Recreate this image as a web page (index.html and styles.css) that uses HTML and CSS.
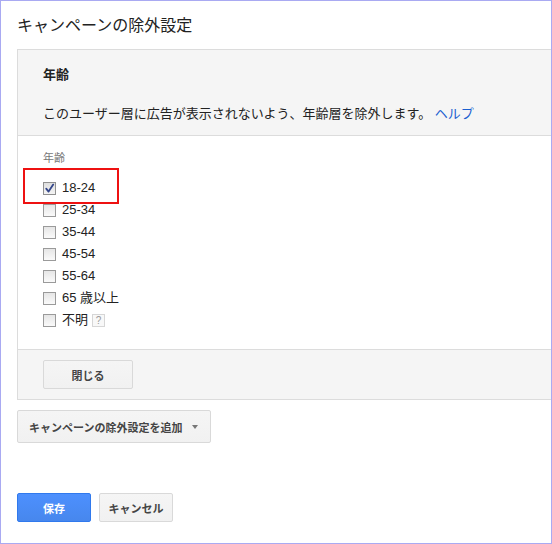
FILE: index.html
```
<!DOCTYPE html>
<html lang="ja">
<head>
<meta charset="utf-8">
<link rel="stylesheet" href="styles.css">
</head>
<body>
<div class="frame">
  <h1 class="title">キャンペーンの除外設定</h1>
  <div class="panel">
    <div class="panel-head">
      <div class="head-title">年齢</div>
      <div class="head-desc">このユーザー層に広告が表示されないよう、年齢層を除外します。 <a class="help" href="#">ヘルプ</a></div>
    </div>
    <div class="panel-body">
      <div class="group-label">年齢</div>
      <ul class="options">
        <li class="opt"><span class="cb checked"><svg viewBox="0 0 13 13" width="13" height="13"><path d="M3.2 6.6 L5.6 9.6 L10.2 2.6" fill="none" stroke="#34468a" stroke-width="1.8" stroke-linecap="round" stroke-linejoin="round"/></svg></span><span class="lbl">18-24</span></li>
        <li class="opt"><span class="cb"></span><span class="lbl">25-34</span></li>
        <li class="opt"><span class="cb"></span><span class="lbl">35-44</span></li>
        <li class="opt"><span class="cb"></span><span class="lbl">45-54</span></li>
        <li class="opt"><span class="cb"></span><span class="lbl">55-64</span></li>
        <li class="opt"><span class="cb"></span><span class="lbl">65 歳以上</span></li>
        <li class="opt"><span class="cb"></span><span class="lbl">不明</span><span class="q">?</span></li>
      </ul>
      <div class="highlight"></div>
    </div>
    <div class="panel-foot">
      <button class="btn btn-close">閉じる</button>
    </div>
  </div>
  <button class="btn btn-add">キャンペーンの除外設定を追加<span class="caret"></span></button>
  <div class="actions">
    <button class="btn btn-primary">保存</button>
    <button class="btn btn-cancel">キャンセル</button>
  </div>
</div>
</body>
</html>
```

FILE: styles.css
```
* { box-sizing: border-box; }
html, body { margin: 0; padding: 0; background: #fff; }
body {
  font-family: "Liberation Sans", Arial, "Noto Sans CJK JP", sans-serif;
  color: #222;
}
.frame {
  width: 552px;
  height: 544px;
  border: 1px solid #a9aaf2;
  padding-left: 16px;
  overflow: hidden;
}
.title {
  margin: 0;
  padding-top: 14px;
  font-size: 16px;
  line-height: 22px;
  font-weight: normal;
  color: #222;
}
.panel {
  margin-top: 12px;
  margin-right: -4px;
  border: 1px solid #dcdcdc;
  border-right: none;
}
.panel-head {
  background: #f5f5f5;
  padding: 16px 25px 12px;
  border-bottom: 1px solid #dcdcdc;
}
.head-title {
  font-size: 13px;
  line-height: 18px;
  font-weight: bold;
  color: #222;
}
.head-desc {
  margin-top: 21px;
  font-size: 13px;
  line-height: 18px;
  color: #222;
}
.help { color: #1a5fd0; text-decoration: none; }
.panel-body {
  position: relative;
  background: #fff;
  padding: 14px 25px 18px;
}
.group-label {
  font-size: 11px;
  line-height: 16px;
  color: #777;
}
.options {
  list-style: none;
  margin: 11px 0 0;
  padding: 0;
}
.opt {
  display: flex;
  align-items: center;
  height: 22px;
  font-size: 13px;
  color: #222;
}
.cb {
  width: 13px;
  height: 13px;
  border: 1px solid #9a9a9a;
  background: linear-gradient(#e6e6e6, #fafafa);
  margin-right: 6px;
  display: flex;
  align-items: center;
  justify-content: center;
  flex: none;
}
.cb svg { display: block; margin: -1px; }
.cb.checked { background: linear-gradient(#dedede, #f4f4f4); border-color: #909090; }
.lbl { line-height: 16px; }
.q {
  margin-left: 4px;
  width: 13px;
  height: 13px;
  border: 1px solid #d6d6d6;
  background: #f8f8f8;
  color: #999;
  font-size: 10px;
  line-height: 11px;
  text-align: center;
}
.highlight {
  position: absolute;
  left: 5px;
  top: 32px;
  width: 96px;
  height: 36px;
  border: 2px solid #ee1111;
}
.panel-foot {
  background: #f5f5f5;
  border-top: 1px solid #dcdcdc;
  padding: 10px 25px;
}
.btn {
  font-family: "Liberation Sans", Arial, "Noto Sans CJK JP", sans-serif;
  font-size: 11px;
  font-weight: bold;
  color: #444;
  background: linear-gradient(#f5f5f5, #f1f1f1);
  border: 1px solid #d9d9d9;
  border-radius: 2px;
  padding: 0;
  display: flex;
  align-items: center;
  justify-content: center;
}
.btn-close { width: 90px; height: 29px; }
.btn-add {
  margin-top: 10px;
  width: 194px;
  height: 33px;
  justify-content: flex-start;
  padding-left: 11px;
}
.caret {
  margin-left: 10px;
  width: 0;
  height: 0;
  border-left: 3.5px solid transparent;
  border-right: 3.5px solid transparent;
  border-top: 4px solid #777;
}
.actions {
  margin-top: 50px;
  display: flex;
  gap: 8px;
}
.btn-primary {
  width: 74px;
  height: 29px;
  color: #fff;
  background: linear-gradient(#4d90fe, #4787ed);
  border-color: #3079ed;
}
.btn-cancel { width: 74px; height: 29px; }
```
